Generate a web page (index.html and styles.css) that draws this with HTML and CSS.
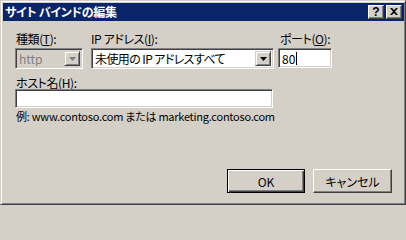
FILE: index.html
```html
<!DOCTYPE html>
<html lang="ja">
<head>
<meta charset="utf-8">
<link rel="stylesheet" href="styles.css">
</head>
<body>
<div class="window">
  <div class="titlebar">
    <span class="title">サイト バインドの編集</span>
    <div class="caption-btns">
      <span class="cbtn help">?</span>
      <span class="cbtn close"><svg width="8" height="7" viewBox="0 0 8 7"><path d="M0 0h2l2 2 2-2h2L5 3.5 8 7H6L4 5 2 7H0l3-3.5z" fill="#000"/></svg></span>
    </div>
  </div>
  <div class="content">
    <div class="fields">
      <label class="lbl">種類(<u>T</u>):</label>
      <label class="lbl">IP アドレス(<u>I</u>):</label>
      <label class="lbl">ポート(<u>O</u>):</label>
      <div class="combo disabled">
        <span class="combo-text">http</span>
        <span class="drop"><svg width="7" height="4" viewBox="0 0 7 4"><path d="M0 0h7L3.5 4z" fill="#808080"/></svg></span>
      </div>
      <div class="combo">
        <span class="combo-text">未使用の IP アドレスすべて</span>
        <span class="drop"><svg width="7" height="4" viewBox="0 0 7 4"><path d="M0 0h7L3.5 4z" fill="#000"/></svg></span>
      </div>
      <div class="field port"><span class="field-text">80</span><span class="caret"></span></div>
    </div>
    <label class="lbl host-lbl">ホスト名(<u>H</u>):</label>
    <div class="field host"></div>
    <p class="hint">例: www.contoso.com または marketing.contoso.com</p>
    <div class="buttons">
      <button class="btn default">OK</button>
      <button class="btn">キャンセル</button>
    </div>
  </div>
</div>
</body>
</html>
```
FILE: styles.css
```css
html, body {
  margin: 0;
  padding: 0;
  background: #d4d0c8;
}
body {
  width: 406px;
  height: 205px;
  overflow: hidden;
  font-family: "Noto Sans CJK JP", "Liberation Sans", sans-serif;
  font-size: 12px;
  font-feature-settings: "palt";
  color: #000;
}
.window {
  box-sizing: border-box;
  width: 406px;
  height: 205px;
  border: 1px solid;
  border-color: #d4d0c8 #404040 #404040 #d4d0c8;
  box-shadow: inset 1px 1px #fff, inset -1px -1px #808080;
  padding: 2px 1px 1px 2px;
  display: flex;
  flex-direction: column;
  background: #d4d0c8;
}
.titlebar {
  height: 18px;
  background: #0a246a;
  display: flex;
  align-items: center;
  justify-content: space-between;
  padding: 0 2px 0 2px;
  flex: none;
}
.title {
  color: #fff;
  font-weight: bold;
  font-size: 12px;
  line-height: 14px;
  letter-spacing: -0.3px;
}
.caption-btns {
  display: flex;
  gap: 2px;
}
.cbtn {
  box-sizing: border-box;
  width: 16px;
  height: 14px;
  background: #d4d0c8;
  border: 1px solid;
  border-color: #fff #404040 #404040 #fff;
  box-shadow: inset -1px -1px #808080;
  display: flex;
  align-items: center;
  justify-content: center;
  font-family: "Liberation Sans", sans-serif;
  font-weight: bold;
  font-size: 12px;
  line-height: 10px;
  padding-bottom: 1px;
}
.content {
  flex: 1;
  display: flex;
  flex-direction: column;
  padding: 11px 12px 10px 12px;
}
.fields {
  display: grid;
  grid-template-columns: 68px 183px 50px;
  column-gap: 8px;
  grid-template-rows: 13px 21px;
  row-gap: 3px;
}
.fields .lbl { padding-left: 1px; }
.fields .lbl:nth-child(2) { padding-left: 0; }
.fields .lbl:nth-child(3) { margin-left: -3px; }
.lbl {
  display: block;
  line-height: 13px;
  white-space: nowrap;
  letter-spacing: -0.4px;
}
.lbl u { text-underline-offset: 1px; }
.combo, .field {
  box-sizing: border-box;
  border: 1px solid;
  border-color: #808080 #fff #fff #808080;
  box-shadow: inset 1px 1px #404040, inset -1px -1px #d4d0c8;
  background: #fff;
  display: flex;
  align-items: center;
  padding: 2px;
  white-space: nowrap;
}
.combo { height: 21px; padding-right: 2px; }
.combo-text {
  flex: 1;
  padding-left: 1px;
  line-height: 15px;
  overflow: hidden;
  letter-spacing: -0.6px;
}
.combo.disabled { background: #d4d0c8; }
.combo.disabled .combo-text { color: #808080; letter-spacing: 0; }
.drop {
  box-sizing: border-box;
  width: 16px;
  height: 15px;
  background: #d4d0c8;
  border: 1px solid;
  border-color: #d4d0c8 #404040 #404040 #d4d0c8;
  box-shadow: inset 1px 1px #fff, inset -1px -1px #808080;
  display: flex;
  align-items: center;
  justify-content: center;
  flex: none;
}
.port {
  height: 20px;
  margin-left: -4px;
}
.field-text { padding-left: 1px; line-height: 15px; }
.caret {
  width: 1px;
  height: 13px;
  background: #000;
  margin-left: 1px;
}
.host-lbl {
  margin-top: 7px;
  padding-left: 1px;
}
.host {
  width: 258px;
  height: 19px;
}
.hint {
  margin: 2px 0 0 1px;
  line-height: 13px;
  font-size: 11px;
  white-space: nowrap;
  letter-spacing: -0.25px;
}
.buttons {
  margin-top: auto;
  display: flex;
  justify-content: flex-end;
  gap: 8px;
}
.btn {
  box-sizing: border-box;
  width: 79px;
  height: 24px;
  margin: 0;
  padding: 0;
  font: inherit;
  color: #000;
  background: #d4d0c8;
  border: 1px solid;
  border-color: #fff #404040 #404040 #fff;
  box-shadow: inset -1px -1px #808080;
}
.btn.default {
  width: 78px;
  border: 1px solid #000;
  box-shadow: inset 1px 1px #fff, inset -1px -1px #404040, inset -2px -2px #808080;
}
```
